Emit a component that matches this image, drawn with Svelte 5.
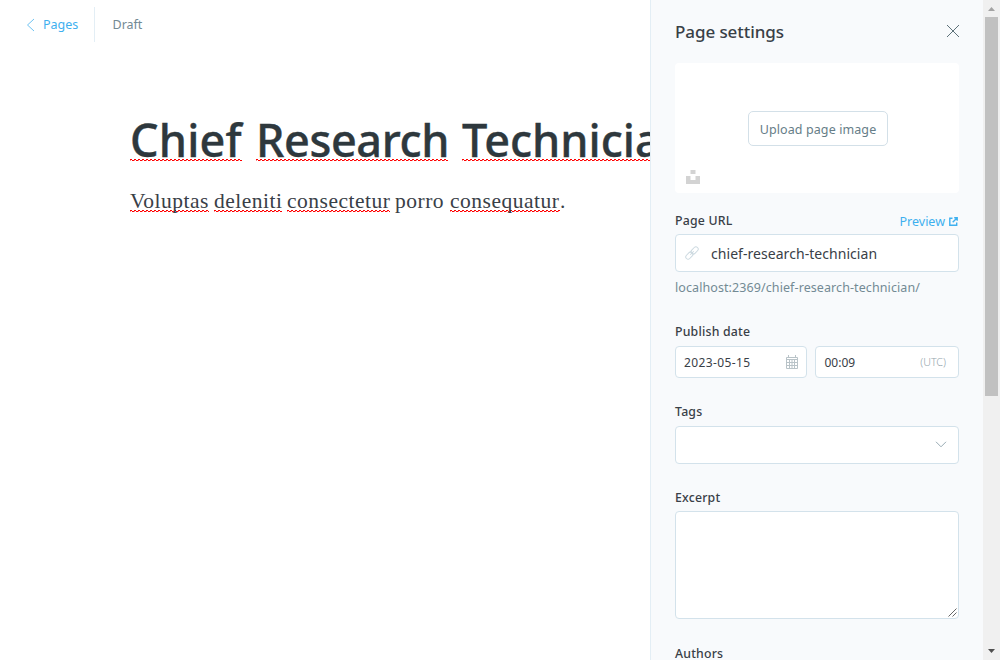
<script>
  const titleWords = [
    { text: 'Chief', width: 112, gap: 14, tracking: 0.2 },
    { text: 'Research', width: 192, gap: 14, tracking: -0.4 },
    { text: 'Technician', width: 234, gap: 0, tracking: 0 }
  ];
  const bodyWords = [
    { text: 'Voluptas', width: 79, flagged: true },
    { text: 'deleniti', width: 68, flagged: true },
    { text: 'consectetur', width: 103, flagged: true },
    { text: 'porro', width: 50, flagged: false },
    { text: 'consequatur', width: 110, flagged: true }
  ];
</script>

<div class="app">
  <main class="editor">
    <header class="bar">
      <a class="back" href="#pages">
        <svg width="9" height="14" viewBox="0 0 9 14"><path d="M8 1 1.5 7 8 13" /></svg>
        <span>Pages</span>
      </a>
      <span class="status">Draft</span>
    </header>
    <article>
      <h1>
        {#each titleWords as word}
          <span class="flag" style="width:{word.width}px;margin-right:{word.gap}px;letter-spacing:{word.tracking}px">{word.text}</span>
        {/each}
      </h1>
      <p>
        {#each bodyWords as word}
          <span class:flag={word.flagged} style="width:{word.width}px">{word.text}</span>
        {/each}
        <span class="stop">.</span>
      </p>
    </article>
  </main>

  <aside class="settings">
    <header class="heading">
      <h2>Page settings</h2>
      <button class="close" aria-label="Close">
        <svg width="14" height="14" viewBox="0 0 14 14"><path d="M1 1 13 13M13 1 1 13" /></svg>
      </button>
    </header>

    <section class="uploader">
      <button class="upload"><span>Upload page image</span></button>
      <svg class="unsplash" width="14" height="14" viewBox="0 0 14 14"><path d="M4.5 0h5v4h-5zM0 6h4.5v4h5V6H14v8H0z" /></svg>
    </section>

    <div class="label-row">
      <label for="url">Page URL</label>
      <a class="preview" href="#preview">
        <span>Preview</span>
        <svg width="9" height="9" viewBox="0 0 9 9"><path d="M3.5 1.3H.8v6.9h6.9V5.5M5.2.8h3v3M8 1 3.7 5.3" /></svg>
      </a>
    </div>
    <div class="field url">
      <svg width="14" height="14" viewBox="0 0 14 14"><g transform="rotate(-45 7 7)"><rect x="-.8" y="4.7" width="8.2" height="4.6" rx="2.3" /><rect x="6.6" y="4.7" width="8.2" height="4.6" rx="2.3" /><path d="M4.5 7h5" /></g></svg>
      <span id="url">chief-research-technician</span>
    </div>
    <div class="hint"><span>localhost:2369/chief-research-technician/</span></div>

    <div class="label publish">Publish date</div>
    <div class="dates">
      <div class="field date">
        <span>2023-05-15</span>
        <svg width="12" height="14" viewBox="0 0 12 14"><path d="M.5 2.5h11v11H.5zM.5 4.5h11M.5 7.5h11M.5 10.5h11M3.5 5v8M6 5v8M8.500 5v8M2.500 0v3M9.500 0v3" /></svg>
      </div>
      <div class="field time"><span>00:09</span><small>(UTC)</small></div>
    </div>

    <div class="label tags">Tags</div>
    <div class="field select">
      <svg width="12" height="7" viewBox="0 0 12 7"><path d="M1 .8 6 5.800 11 .8" /></svg>
    </div>

    <div class="label excerpt">Excerpt</div>
    <div class="field area">
      <svg width="9" height="9" viewBox="0 0 9 9"><path d="M.5 8.500 8.500 .5M4.500 8.500 8.500 4.500" /></svg>
    </div>

    <div class="label authors">Authors</div>
  </aside>

  <div class="scrollbar">
    <svg width="7" height="4" viewBox="0 0 7 4"><path fill="#a3a3a3" d="M3.500 0 7 4H0z" /></svg>
    <div class="thumb"></div>
    <svg width="7" height="4" viewBox="0 0 7 4"><path fill="#505050" d="M0 0h7L3.500 4z" /></svg>
  </div>
</div>

<style>
  :global(body) { margin: 0; }
  * { box-sizing: border-box; }
  .app {
    display: grid;
    grid-template-columns: 650px 333px 17px;
    width: 1000px;
    height: 660px;
    overflow: hidden;
    background: #fff;
    color: #394047;
    font-family: "Noto Sans", "Open Sans", sans-serif;
    font-size: 12.5px;
    white-space: nowrap;
  }
  svg { display: block; fill: none; flex: none; }
  a { text-decoration: none; }
  button { margin: 0; padding: 0; border: 0; background: none; font: inherit; }

  .editor { overflow: hidden; }
  .bar { display: flex; height: 48px; padding: 7px 0 0 26px; line-height: 34px; }
  .back { display: flex; align-items: center; gap: 8px; width: 69px; height: 35px; border-right: 1px solid #e3eef5; color: #3eb0ef; }
  .back svg { stroke: #6fc3f2; }
  .status { padding: 1px 0 0 17.500px; color: #738a94; }
  article { padding: 64px 0 0 130px; }
  h1 { display: flex; margin: 0; height: 58px; line-height: 56px; font-size: 45px; font-weight: 500; color: #2e383d; -webkit-text-stroke: .4px #2e383d; }
  h1 span, p span { display: block; flex: none; }
  .flag {
    background:
      repeating-linear-gradient(90deg, #f00 0 2px, transparent 2px 4px) 0 calc(100% - 1px) / 100% 1px no-repeat,
      repeating-linear-gradient(90deg, #f88 0 1px, transparent 1px 2px, #f00 2px 4px) 0 100% / 100% 1px no-repeat;
  }
  h1 .flag { height: 49px; }
  p { display: flex; gap: 5px; margin: 19px 0 0; line-height: 24px; font-family: "Liberation Serif", serif; font-size: 21.5px; letter-spacing: .5px; color: #394047; }
  p span { height: 23px; }
  p .stop { margin-left: -5px; }

  .settings { border-left: 1px solid #e3eef5; background: #f8fafc; padding: 0 24px; overflow: hidden; }
  .heading { display: flex; justify-content: space-between; height: 63px; align-items: center; }
  h2 { margin: 0; font-size: 17px; line-height: 24px; font-weight: 500; letter-spacing: -.08px; }
  .close { margin: 0 -1px 2px 0; }
  .close svg { stroke: #5d7179; }
  .uploader { display: grid; position: relative; place-items: center; height: 130px; padding-left: 2px; border-radius: 4px; background: #fff; }
  .upload { width: 140px; height: 35px; padding-top: 2px; border: 1px solid #d3e0e8; border-radius: 5px; color: #667d87; letter-spacing: .1px; }
  .unsplash { position: absolute; left: 11px; bottom: 9px; fill: #d3d3d3; }
  .label-row { display: flex; justify-content: space-between; padding-top: 18px; height: 41px; line-height: 19px; }
  label, .label { font-weight: 500; font-size: 12.3px; line-height: 19px; letter-spacing: .2px; }
  .preview { display: flex; gap: 4px; align-items: center; height: 20px; padding-right: 1px; color: #3eb0ef; }
  .preview svg { stroke: #3eb0ef; stroke-width: 1.4; }
  .field { display: flex; align-items: center; background: #fff; border: 1px solid #d3e2eb; border-radius: 4px; }
  .url { height: 38px; padding-left: 9px; gap: 12px; font-size: 14px; letter-spacing: .05px; }
  .url svg { stroke: #ccd9e0; }
  .hint { height: 50px; padding-top: 6px; line-height: 19px; color: #738a94; letter-spacing: .09px; }
  .dates { display: flex; gap: 8px; margin-top: 5px; height: 32px; }
  .date, .time { justify-content: space-between; padding: 0 8px; font-size: 12px; }
  .date { width: 132px; letter-spacing: .38px; }
  .date svg { stroke: #b9c3c8; }
  .time { width: 144px; padding: 0 12px 0 8.500px; }
  small { font-size: 10.700px; font-weight: 300; color: #95a5ad; }
  .tags { margin-top: 24px; }
  .select { height: 38px; margin-top: 5px; justify-content: flex-end; padding: 0 11px 2px 0; }
  .select svg { stroke: #98aab3; }
  .excerpt { margin-top: 24px; }
  .area { height: 108px; margin-top: 4px; align-items: flex-end; justify-content: flex-end; padding: 1px; }
  .area svg { stroke: #666; }
  .authors { margin-top: 25px; }

  .scrollbar { display: flex; flex-direction: column; align-items: center; background: #f0f0f0; padding: 7px 0 7px; }
  .thumb { width: 13px; height: 379px; margin: 6px 0 auto; background: #c1c1c1; }
</style>
